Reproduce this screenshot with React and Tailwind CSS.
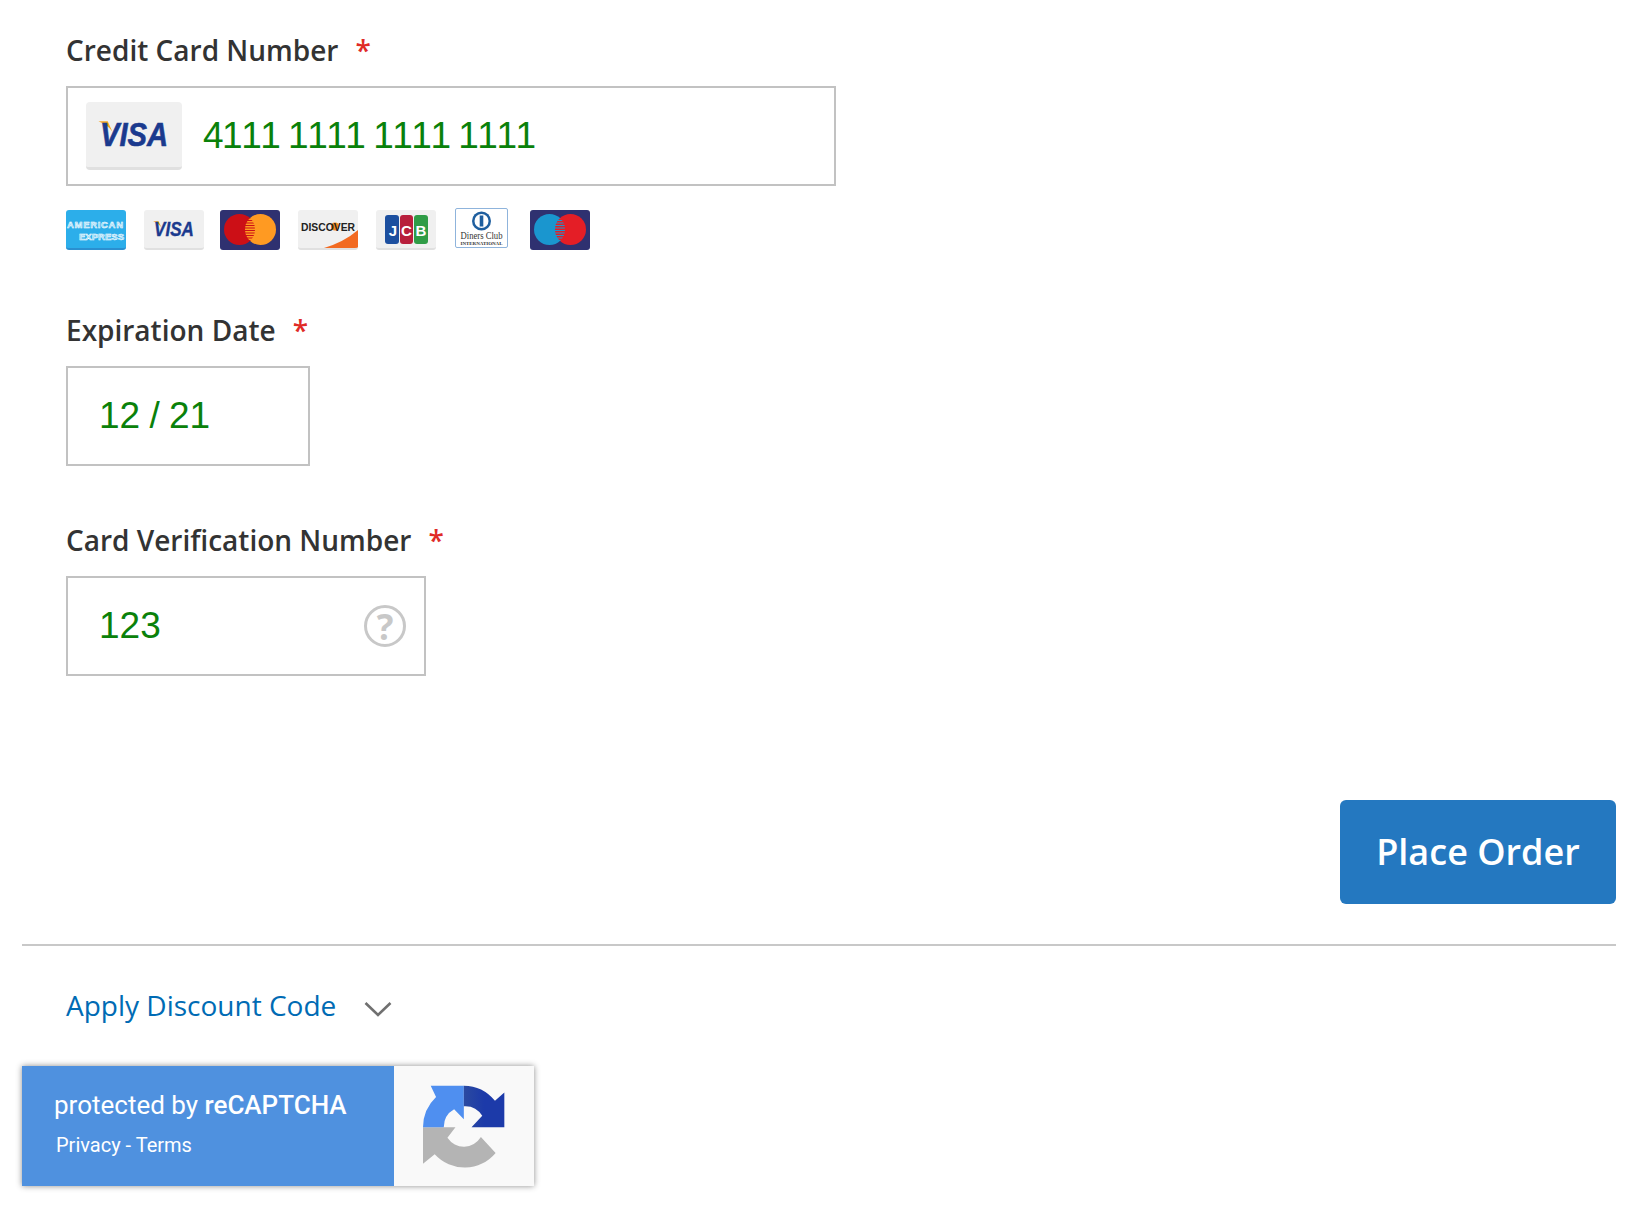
import { useId } from 'react'

const labelClass = "h-10 pb-px flex items-center font-['Open_Sans',sans-serif] font-semibold text-[28px] text-[#333333]"
const valueClass = "pb-0.5 font-['Liberation_Sans',sans-serif] text-[37px] text-[#0a810a] leading-none"

function Label({ children }) {
  return (
    <div className={labelClass}>
      {children}
      <span className="ml-[17px] text-[#e02b27] font-['Open_Sans',sans-serif] text-[28px]">*</span>
    </div>
  )
}

function VisaMark() {
  return (
    <svg viewBox="0 0 60 42" className="w-full h-full">
      <path d="M7 12.5 L13 12.5 L16 19 Q13 15 7 12.5 Z" fill="#f5a623" />
      <text x="30" y="28.5" textAnchor="middle" fontFamily="Liberation Sans" fontWeight="700" fontStyle="italic" fontSize="22" fill="#1b3a8e" stroke="#1b3a8e" strokeWidth="0.4" textLength="44" lengthAdjust="spacingAndGlyphs">VISA</text>
    </svg>
  )
}

function LightCard({ children }) {
  return <div className="w-[60px] h-10 rounded-[3px] bg-[#f0f0f0] border-b-2 border-[#e0e0e0] overflow-hidden">{children}</div>
}

function Amex() {
  return (
    <div className="w-[60px] h-10 rounded-[3px] overflow-hidden bg-[#2caeea] border-b-2 border-[#2a8fd0]">
      <svg viewBox="0 0 60 38" className="w-full h-full">
        <text x="1" y="18" fontFamily="Liberation Sans" fontWeight="700" fontSize="9.5" fill="#7fd0f5" stroke="#ffffff" strokeWidth="0.5" textLength="56" lengthAdjust="spacing">AMERICAN</text>
        <text x="13" y="30" fontFamily="Liberation Sans" fontWeight="700" fontSize="9.5" fill="#7fd0f5" stroke="#ffffff" strokeWidth="0.5" textLength="45" lengthAdjust="spacing">EXPRESS</text>
      </svg>
    </div>
  )
}

function Circles({ left, right }) {
  const id = useId()
  return (
    <div className="w-[60px] h-10 rounded-[3px] bg-[#2f3170] overflow-hidden">
      <svg viewBox="0 0 60 40" className="w-full h-full">
        <circle cx="19.5" cy="19.5" r="15.5" fill={left} />
        <circle cx="40.5" cy="19.5" r="15.5" fill={right} />
        <clipPath id={id}><circle cx="19.5" cy="19.5" r="15.5" /></clipPath>
        <g clipPath={`url(#${id})`} stroke={left} strokeWidth="1.2">
          {[8, 10.5, 13, 15.5, 18, 20.5, 23, 25.5, 28, 30.5].map((y) => (
            <line key={y} x1="25" x2="35" y1={y} y2={y} />
          ))}
        </g>
      </svg>
    </div>
  )
}

function Discover() {
  return (
    <LightCard>
      <svg viewBox="0 0 60 38" className="w-full h-full">
        <path d="M26 38 Q46 32 60 20 V38 Z" fill="#f26a21" />
        <circle cx="37" cy="16.5" r="4" fill="#f58a1f" />
        <text x="30" y="20.5" textAnchor="middle" fontFamily="Liberation Sans" fontWeight="700" fontSize="11" fill="#222222" textLength="54" lengthAdjust="spacingAndGlyphs">DISCOVER</text>
      </svg>
    </LightCard>
  )
}

function Jcb() {
  return (
    <LightCard>
      <svg viewBox="0 0 60 38" className="w-full h-full">
        <rect x="9" y="5" width="14" height="29" rx="3" fill="#1c4f9f" />
        <rect x="24" y="5" width="13" height="29" rx="3" fill="#b81f3c" />
        <rect x="38" y="5" width="14" height="29" rx="3" fill="#2f9c46" />
        <text x="17" y="26" textAnchor="middle" fontFamily="Liberation Sans" fontWeight="700" fontSize="15" fill="#ffffff">J</text>
        <text x="30.5" y="26" textAnchor="middle" fontFamily="Liberation Sans" fontWeight="700" fontSize="15" fill="#ffffff">C</text>
        <text x="45" y="26" textAnchor="middle" fontFamily="Liberation Sans" fontWeight="700" fontSize="15" fill="#ffffff">B</text>
      </svg>
    </LightCard>
  )
}

function Diners() {
  return (
    <div className="w-[53px] h-10 rounded-[2px] bg-white border border-[#8fb4dc]">
      <svg viewBox="0 0 51 38" className="w-full h-full">
        <circle cx="25.5" cy="12" r="9.5" fill="#1f5f9f" />
        <circle cx="25.5" cy="12" r="7" fill="#ffffff" />
        <rect x="23.7" y="6.5" width="3.6" height="11" fill="#1f5f9f" />
        <text x="25.5" y="29.5" textAnchor="middle" fontFamily="Liberation Serif" fontSize="10" fill="#333333" textLength="42" lengthAdjust="spacingAndGlyphs">Diners Club</text>
        <text x="25.5" y="35.5" textAnchor="middle" fontFamily="Liberation Serif" fontWeight="700" fontSize="4.4" fill="#333333" textLength="42" lengthAdjust="spacingAndGlyphs">INTERNATIONAL</text>
      </svg>
    </div>
  )
}

function RecaptchaLogo() {
  const id = useId()
  return (
    <svg viewBox="85 60 245 245" preserveAspectRatio="none" className="w-[82px] h-[84px] mt-0.5 blur-[0.5px]">
      <linearGradient id={id} x1="0" x2="1" y1="0" y2="0">
        <stop offset="0" stopColor="#2b4aa0" />
        <stop offset="0.5" stopColor="#1c3aa9" />
      </linearGradient>
      <path d="M85 183 H182 L158 214 A60 60 0 0 0 258 212 L302 258 A122 122 0 0 1 120 262 L85 290 Z" fill="#b4b4b4" />
      <path d="M85 183 A122 122 0 0 1 124 95 L108 62 H207 V160 L178 131 A60 60 0 0 0 147 183 Z" fill="#4f8ff0" />
      <path d="M207 62 A122 122 0 0 1 300 106 L328 82 V183 H230 L262 150 A60 60 0 0 0 207 122 Z" fill={`url(#${id})`} />
    </svg>
  )
}

function HelpIcon() {
  return (
    <div className="w-[42px] h-[42px] rounded-full border-[3px] border-[#c8c8c8] flex items-center justify-center font-['Open_Sans',sans-serif] font-bold text-[35px] text-[#c8c8c8] leading-none">
      ?
    </div>
  )
}

export default function App() {
  return (
    <div className="w-[1646px] h-[1226px] bg-white pt-[30px] pl-[22px] pr-[30px] overflow-hidden">
      <div className="pl-[44px]">
        <Label>Credit Card Number</Label>
        <div className="mt-4 w-[770px] h-[100px] border-2 border-[#c2c2c2] flex items-center pl-[18px]">
          <div className="w-[96px] h-[68px] rounded-[4px] bg-[#f0f0f0] border-b-[3px] border-[#e0e0e0] overflow-hidden">
            <VisaMark />
          </div>
          <span className={`ml-[21px] ${valueClass} [font-kerning:none] tracking-[-1.5px]`}>4111 1111 1111 1111</span>
        </div>

        <div className="mt-[22px] h-[44px] flex items-start">
          <div className="mt-[2px]"><Amex /></div>
          <div className="ml-[18px] mt-[2px]"><LightCard><VisaMark /></LightCard></div>
          <div className="ml-[16px] mt-[2px]"><Circles left="#cc0f16" right="#ff9a22" /></div>
          <div className="ml-[18px] mt-[2px]"><Discover /></div>
          <div className="ml-[18px] mt-[2px]"><Jcb /></div>
          <div className="ml-[19px]"><Diners /></div>
          <div className="ml-[22px] mt-[2px]"><Circles left="#1a96cf" right="#e41e26" /></div>
        </div>

        <div className="mt-[58px]">
          <Label>Expiration Date</Label>
        </div>
        <div className="mt-4 w-[244px] h-[100px] border-2 border-[#c2c2c2] flex items-center pl-[31px]">
          <span className={`${valueClass} [word-spacing:-1px]`}>12 / 21</span>
        </div>

        <div className="mt-[54px]">
          <Label>Card Verification Number</Label>
        </div>
        <div className="mt-4 w-[360px] h-[100px] border-2 border-[#c2c2c2] flex items-center justify-between pl-[31px] pr-[18px]">
          <span className={valueClass}>123</span>
          <HelpIcon />
        </div>
      </div>

      <div className="mt-[124px] flex justify-end">
        <button className="w-[276px] h-[104px] rounded-[6px] bg-[#2478c0] text-white font-['Open_Sans',sans-serif] font-semibold text-[36px]">
          Place Order
        </button>
      </div>

      <div className="mt-[40px] h-[2px] bg-[#c8c8c8]" />

      <div className="mt-[39px] pl-[44px] h-10 flex items-center">
        <span className="font-['Open_Sans',sans-serif] text-[28px] text-[#006bb4]">Apply Discount Code</span>
        <svg viewBox="0 0 28 16" className="ml-7 mt-[7px] w-7 h-4" fill="none" stroke="#707070" strokeWidth="2.6">
          <path d="M1.5 2 L14 14 L26.5 2" />
        </svg>
      </div>

      <div className="mt-[41px] w-[512px] h-[120px] flex shadow-[0_0_6px_rgba(0,0,0,0.45)]">
        <div className="w-[372px] bg-[#4f91df] text-white font-['Roboto',sans-serif] pl-8 pt-[23px]">
          <div className="text-[26px] leading-8">protected by <span className="font-medium">reCAPTCHA</span></div>
          <div className="mt-[12px] ml-[2px] text-[20px] leading-6">Privacy - Terms</div>
        </div>
        <div className="flex-1 bg-[#f9f9f9] flex items-center justify-center">
          <RecaptchaLogo />
        </div>
      </div>
    </div>
  )
}
